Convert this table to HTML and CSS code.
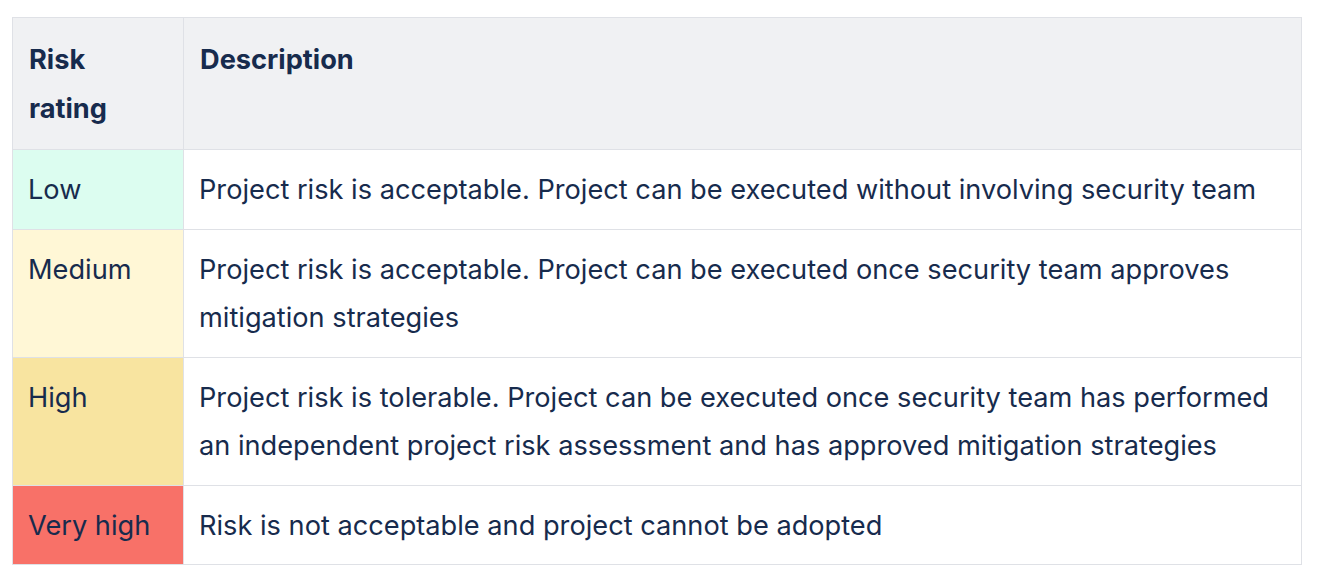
FILE: index.html
```html
<!DOCTYPE html>
<html>
<head>
<meta charset="utf-8">
<link rel="stylesheet" href="styles.css">
</head>
<body>
<table class="risk-table">
  <thead>
    <tr>
      <th class="col-rating">Risk rating</th>
      <th>Description</th>
    </tr>
  </thead>
  <tbody>
    <tr>
      <td class="rating low">Low</td>
      <td>Project risk is acceptable. Project can be executed without involving security team</td>
    </tr>
    <tr>
      <td class="rating medium">Medium</td>
      <td>Project risk is acceptable. Project can be executed once security team approves mitigation strategies</td>
    </tr>
    <tr>
      <td class="rating high">High</td>
      <td>Project risk is tolerable. Project can be executed once security team has performed an independent project risk assessment and has approved mitigation strategies</td>
    </tr>
    <tr>
      <td class="rating very-high">Very high</td>
      <td>Risk is not acceptable and project cannot be adopted</td>
    </tr>
  </tbody>
</table>
</body>
</html>
```

FILE: styles.css
```css
html, body {
  margin: 0;
  padding: 0;
  background: #ffffff;
}
body {
  padding: 17px 0 0 12px;
  font-family: Inter, "Noto Sans", sans-serif;
  color: #172b4d;
}
.risk-table {
  border-collapse: collapse;
  width: 1290px;
  table-layout: fixed;
  font-size: 27.2px;
  line-height: 48.5px;
}
.risk-table th,
.risk-table td {
  border: 1px solid #dfe1e6;
  vertical-align: top;
  text-align: left;
  padding: 16px 15px 14px;
}
.risk-table th {
  background: #f0f1f3;
  font-weight: 700;
  padding: 18px 15px 16px 16px;
}
.col-rating {
  width: 139px;
}
.low { background: #dcfdf0; }
.medium { background: #fff7d6; }
.high { background: #f8e4a0; }
.very-high { background: #f87168; }
```
